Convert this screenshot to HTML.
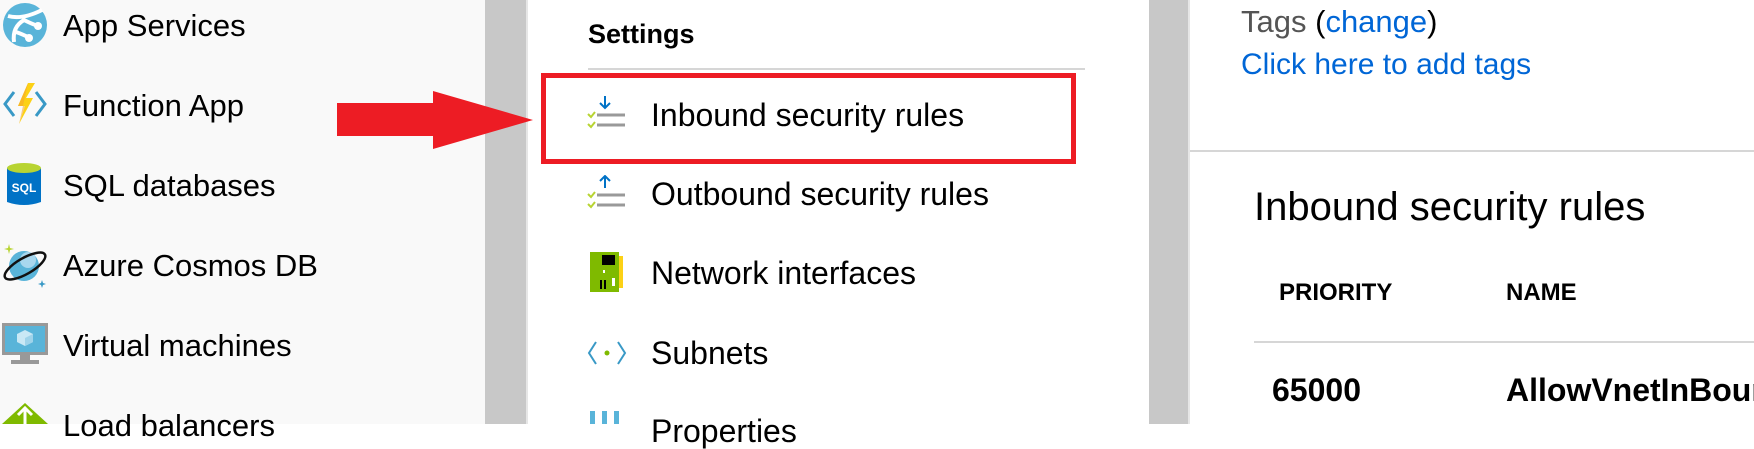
<!DOCTYPE html>
<html><head><meta charset="utf-8"><style>
*{margin:0;padding:0;box-sizing:border-box}
body{width:1754px;height:424px;overflow:hidden;position:relative;background:#fff;font-family:"Liberation Sans",sans-serif;color:#000}
.a{position:absolute;white-space:nowrap}
.l{font-size:31px;line-height:36px}
.m{font-size:32px;line-height:36px}
svg{position:absolute}
</style></head><body>
<div class="a" style="left:0;top:0;width:485px;height:424px;background:#f9f9f9"></div>
<div class="a" style="left:485px;top:0;width:41px;height:424px;background:#c8c8c8"></div>
<div class="a" style="left:526px;top:0;width:2px;height:424px;background:#e6e6e6"></div>
<div class="a" style="left:1149px;top:0;width:39px;height:424px;background:#c8c8c8"></div>
<div class="a" style="left:1188px;top:0;width:2px;height:424px;background:#e6e6e6"></div>

<!-- left icons -->
<svg style="left:2px;top:2px" width="46" height="46" viewBox="0 0 46 46"><circle cx="23" cy="23" r="22" fill="#59b4d9"/><path d="M6 14 Q20 18 40 8 M12 40 Q10 25 22 18 Q30 22 36 24 M14 30 Q20 32 28 36" stroke="#fff" stroke-width="4" fill="none"/><circle cx="36" cy="24" r="4" fill="#fff"/><circle cx="27" cy="36" r="4" fill="#fff"/></svg>
<svg style="left:2px;top:82px" width="46" height="44" viewBox="0 0 46 44"><path d="M12 10 L3 22 L12 34 M34 10 L43 22 L34 34" stroke="#3999c6" stroke-width="3" fill="none"/><path d="M26 1 L16 24 L23 24 L17 42 L31 16 L24 16 L33 1 Z" fill="#fcd116"/><path d="M26 1 L16 24 L23 24 L17 42 Z" fill="#f7a72f" opacity=".6"/></svg>
<svg style="left:6px;top:162px" width="36" height="46" viewBox="0 0 36 46"><path d="M1 6 V40 Q18 46 35 40 V6 Z" fill="#0072c6"/><ellipse cx="18" cy="6" rx="17" ry="5" fill="#b8d432"/><text x="18" y="30" font-size="12" font-weight="bold" fill="#fff" text-anchor="middle" font-family="Liberation Sans">SQL</text></svg>
<svg style="left:2px;top:242px" width="46" height="46" viewBox="0 0 46 46"><circle cx="22" cy="24" r="15" fill="#59b4d9"/><circle cx="26" cy="18" r="8" fill="#a8d7ee"/><ellipse cx="23" cy="24" rx="23" ry="8" transform="rotate(-30 23 24)" stroke="#111" stroke-width="2.5" fill="none"/><path d="M7 2 L8 6 L12 7 L8 8 L7 12 L6 8 L2 7 L6 6Z" fill="#b8d432"/><path d="M40 38 L41 41 L44 42 L41 43 L40 46 L39 43 L36 42 L39 41Z" fill="#3999c6"/></svg>
<svg style="left:2px;top:323px" width="46" height="42" viewBox="0 0 46 42"><rect x="0" y="0" width="46" height="32" fill="#999"/><rect x="3" y="3" width="40" height="26" fill="#59b4d9"/><path d="M23 7 L31 11 V19 L23 23 L15 19 V11Z" fill="#c9e8f5"/><path d="M23 15 L31 11 V19 L23 23Z" fill="#9fd3ea"/><rect x="18" y="32" width="10" height="5" fill="#999"/><rect x="9" y="37" width="28" height="4" fill="#999"/></svg>
<svg style="left:2px;top:403px" width="46" height="21" viewBox="0 0 46 21"><path d="M23 0 L46 21 H0Z" fill="#7fba00"/><path d="M23 5 V21 M16 12 L23 5 L30 12" stroke="#fff" stroke-width="3" fill="none"/></svg>

<div class="a l" style="left:63px;top:8px">App Services</div>
<div class="a l" style="left:63px;top:88px">Function App</div>
<div class="a l" style="left:63px;top:168px">SQL databases</div>
<div class="a l" style="left:63px;top:248px">Azure Cosmos DB</div>
<div class="a l" style="left:63px;top:328px">Virtual machines</div>
<div class="a l" style="left:63px;top:408px">Load balancers</div>

<!-- arrow -->
<svg style="left:336px;top:90px" width="200" height="60" viewBox="0 0 200 60"><path d="M1 13 H97 V1 L197 30 L97 59 V46 H1Z" fill="#ed1c24"/></svg>

<!-- middle -->
<div class="a" style="left:588px;top:18px;font-size:27px;font-weight:bold;line-height:32px">Settings</div>
<div class="a" style="left:588px;top:68px;width:497px;height:2px;background:#d6d6d6"></div>
<div class="a" style="left:541px;top:73px;width:535px;height:91px;border:5px solid #ed1c24"></div>

<svg style="left:587px;top:95px" width="40" height="36" viewBox="0 0 40 36"><path d="M18 1 V12 M13 8 L18 13 L23 8" stroke="#0072c6" stroke-width="2" fill="none"/><path d="M10 20 H38 M10 30 H38" stroke="#999" stroke-width="3"/><path d="M1 19 L4 22 L8 17 M1 29 L4 32 L8 27" stroke="#b8d432" stroke-width="2" fill="none"/></svg>
<svg style="left:587px;top:175px" width="40" height="36" viewBox="0 0 40 36"><path d="M18 13 V2 M13 6 L18 1 L23 6" stroke="#0072c6" stroke-width="2" fill="none"/><path d="M10 20 H38 M10 30 H38" stroke="#999" stroke-width="3"/><path d="M1 19 L4 22 L8 17 M1 29 L4 32 L8 27" stroke="#b8d432" stroke-width="2" fill="none"/></svg>
<svg style="left:590px;top:252px" width="34" height="40" viewBox="0 0 34 40"><rect x="0" y="0" width="29" height="40" fill="#7fba00"/><rect x="29" y="4" width="4" height="32" fill="#fcd116"/><rect x="12" y="3" width="13" height="10" fill="#000"/><rect x="10" y="28" width="2" height="9" fill="#000"/><rect x="14" y="28" width="2" height="9" fill="#000"/><rect x="22" y="26" width="3" height="8" fill="#fff"/><rect x="13" y="18" width="2" height="3" fill="#fff"/></svg>
<svg style="left:587px;top:340px" width="40" height="26" viewBox="0 0 40 26"><path d="M9 2 L2 13 L9 24 M31 2 L38 13 L31 24" stroke="#3999c6" stroke-width="2" fill="none"/><circle cx="20" cy="13" r="2.5" fill="#7fba00"/></svg>
<svg style="left:590px;top:411px" width="34" height="13" viewBox="0 0 34 13"><rect x="0" y="0" width="5" height="13" fill="#59b4d9"/><rect x="12" y="0" width="5" height="13" fill="#59b4d9"/><rect x="24" y="0" width="5" height="13" fill="#59b4d9"/></svg>

<div class="a m" style="left:651px;top:97px">Inbound security rules</div>
<div class="a m" style="left:651px;top:176px">Outbound security rules</div>
<div class="a m" style="left:651px;top:255px">Network interfaces</div>
<div class="a m" style="left:651px;top:335px">Subnets</div>
<div class="a m" style="left:651px;top:413px">Properties</div>

<!-- right -->
<div class="a" style="left:1241px;top:4px;font-size:31px;line-height:36px;color:#555">Tags <span style="color:#000">(</span><span style="color:#0066d6">change</span><span style="color:#000">)</span></div>
<div class="a" style="left:1241px;top:47px;font-size:30px;line-height:36px;color:#0066d6">Click here to add tags</div>
<div class="a" style="left:1190px;top:150px;width:564px;height:2px;background:#d6d6d6"></div>
<div class="a" style="left:1254px;top:184px;font-size:40px;line-height:46px">Inbound security rules</div>
<div class="a" style="left:1279px;top:279px;font-size:24px;font-weight:bold;line-height:28px">PRIORITY</div>
<div class="a" style="left:1506px;top:279px;font-size:24px;font-weight:bold;line-height:28px">NAME</div>
<div class="a" style="left:1254px;top:341px;width:500px;height:2px;background:#d6d6d6"></div>
<div class="a" style="left:1272px;top:371px;font-size:32px;font-weight:bold;line-height:38px">65000</div>
<div class="a" style="left:1506px;top:371px;font-size:32px;font-weight:bold;line-height:38px">AllowVnetInBound</div>
</body></html>
